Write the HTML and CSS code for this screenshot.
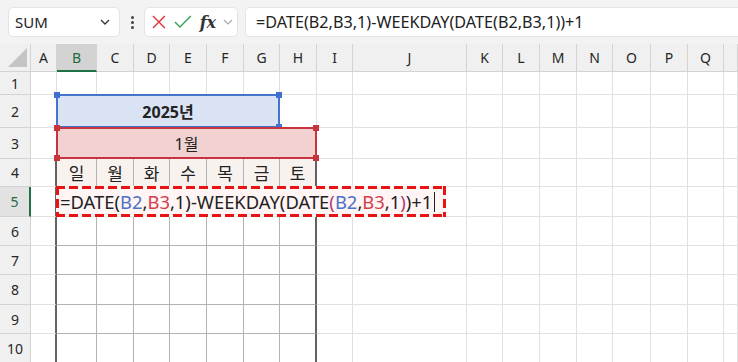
FILE: index.html
```html
<!DOCTYPE html>
<html lang="ko">
<head>
    <meta charset="UTF-8">
    <title>달력 수식</title>
    <link rel="stylesheet" href="styles.css">
</head>
<body>
    <div class="topbar">
        <div class="namebox">
            <span>SUM</span>
            <svg width="10" height="6" viewBox="0 0 10 6"><polyline points="1,1 5,5 9,1" fill="none" stroke="#333" stroke-width="1.3"/></svg>
        </div>
        <div class="kebab"><i></i><i></i><i></i></div>
        <div class="fxbox">
            <svg width="16" height="16" viewBox="0 0 16 16"><path d="M2 2 L14 14 M14 2 L2 14" stroke="#e2323c" stroke-width="1.4" fill="none"/></svg>
            <svg width="18" height="14" viewBox="0 0 18 14"><polyline points="1,7 6,12 17,1" fill="none" stroke="#3aa555" stroke-width="1.5"/></svg>
            <span class="fx">fx</span>
            <svg width="10" height="6" viewBox="0 0 10 6"><polyline points="1,1 5,5 9,1" fill="none" stroke="#aaa" stroke-width="1.2"/></svg>
        </div>
        <div class="formula">=DATE(B2,B3,1)-WEEKDAY(DATE(B2,B3,1))+1</div>
    </div>

    <div class="sheet" id="sheet">
        <div class="corner"><svg width="19" height="19" viewBox="0 0 19 19"><polygon points="19,0 19,19 0,19" fill="#c4c4c4"/></svg></div>
        <div class="box year">2025년
            <b class="h tl"></b><b class="h tr"></b><b class="h br"></b>
        </div>
        <div class="box month">1월
            <b class="h tl"></b><b class="h tr"></b><b class="h bl"></b><b class="h br"></b>
        </div>
        <div class="edit">=DATE(<span class="ref-b">B2</span>,<span class="ref-r">B3</span>,1)-WEEKDAY(DATE<span class="par">(</span><span class="ref-b">B2</span>,<span class="ref-r">B3</span>,1<span class="par">)</span>)+1<span class="caret"></span></div>
    </div>

    <script>
        const lettres = ['', 'A', 'B', 'C', 'D', 'E', 'F', 'G', 'H', 'I', 'J', 'K', 'L', 'M', 'N', 'O', 'P', 'Q', ''];
        const jours = ['일', '월', '화', '수', '목', '금', '토'];
        const sheet = document.getElementById('sheet');
        const first = sheet.firstElementChild;

        // grille de cellules, posée sous les cadres
        for (let r = 0; r <= 10; r++) {
            for (let c = 0; c < lettres.length; c++) {
                if (r === 0 && c === 0) continue;
                const d = document.createElement('div');
                d.className = 'c';
                if (r === 0) {
                    d.classList.add('ch');
                    d.textContent = lettres[c];
                    if (c === 2) d.classList.add('sel');
                } else if (c === 0) {
                    d.classList.add('rh');
                    d.textContent = r;
                    if (r === 5) d.classList.add('sel');
                } else {
                    if (r >= 4 && c >= 2 && c <= 8) d.classList.add('tbl');
                    if (r === 4 && c >= 2 && c <= 8) { d.classList.add('day'); d.textContent = jours[c - 2]; }
                    if (r >= 4 && (c === 1 || c === 8)) d.classList.add('edge');
                }
                d.style.gridArea = (r + 1) + ' / ' + (c + 1);
                sheet.insertBefore(d, first);
            }
        }
    </script>
</body>
</html>
```

FILE: styles.css
```css
* { box-sizing: border-box; }
body { margin: 0; width: 738px; height: 362px; overflow: hidden; background: #fff; font-family: "Noto Sans", "Noto Sans CJK KR", sans-serif; color: #222; }

.topbar { display: flex; align-items: center; height: 44px; padding: 7px 0 7px 8px; background: #f3f3f3; }
.namebox { width: 112px; height: 30px; display: flex; align-items: center; justify-content: space-between; padding: 0 9px 0 6px; background: #fff; border: 1px solid #e4e4e4; border-radius: 5px; font-size: 15px; }
.kebab { width: 24px; display: flex; flex-direction: column; align-items: center; gap: 2px; }
.kebab i { width: 3px; height: 3px; border-radius: 50%; background: #444; }
.fxbox { width: 94px; height: 30px; display: flex; align-items: center; gap: 7px; padding: 0 4px 0 6px; background: #fff; border: 1px solid #e4e4e4; border-radius: 5px; }
.fx { font-family: "DejaVu Serif", serif; font-style: italic; font-weight: bold; font-size: 16px; color: #333; margin-left: 1px; }
.formula { flex: 1; height: 30px; margin-left: 7px; padding-left: 10px; line-height: 28px; background: #fff; border: 1px solid #e4e4e4; border-right: 0; border-radius: 5px 0 0 5px; font-size: 16.2px; white-space: nowrap; }

.sheet { display: grid; grid-template-columns: 31px 26px 40px 37px 36px 37px 37px 36px 37px 36px 114px 36px 37px 37px 36px 38px 37px 36px 1fr; grid-template-rows: 28px 23px 33px 31px 28px 30px 29px 29px 30px 29px 29px; }
.c { display: flex; align-items: center; justify-content: center; border-right: 1px solid #e1e1e1; border-bottom: 1px solid #e1e1e1; }
.ch, .rh { background: #f0f0f0; border-color: #d3d3d3; font-size: 14px; color: #262626; }
.ch.sel { background: #d3d3d3; color: #1e6b43; border-bottom: 2px solid #1e7145; }
.rh.sel { background: #e2e2e2; color: #1e6b43; border-right: 2px solid #1e7145; }
.corner { grid-area: 1 / 1; display: flex; align-items: flex-end; justify-content: flex-end; padding: 0 3px 4px 0; background: #f0f0f0; border-right: 1px solid #d3d3d3; border-bottom: 1px solid #d3d3d3; }

.tbl { border-color: #b3b3b3; }
.day { background: #f8f2ef; font-size: 17px; }
.edge { border-right: 2px solid #626262; }

.box { position: relative; display: flex; align-items: center; justify-content: center; font-size: 16px; }
.year { grid-column: 3 / 9; grid-row: 3; margin: -1px 0 0 -1px; background: #dae3f3; border: 2px solid #4474cc; font-weight: bold; }
.month { grid-column: 3 / 10; grid-row: 4; margin: -1px 0 0 -1px; background: #f1d2d1; border: 2px solid #c73440; }
.h { position: absolute; width: 6px; height: 6px; }
.year .h { background: #3f6fcf; }
.month .h { background: #c73440; }
.tl { top: -4px; left: -4px; }
.tr { top: -4px; right: -4px; }
.bl { bottom: -4px; left: -4px; }
.br { bottom: -4px; right: -4px; }

/* cadre pointillé en dégradés : tirets de 9px, comme dans Excel */
.edit {
    grid-column: 3 / 12; grid-row: 6; justify-self: start; position: relative;
    display: flex; align-items: center; margin: -1px 0 0 -1px; padding: 3px 11px 3px 4px;
    font-size: 18.4px; white-space: nowrap;
    background:
        repeating-linear-gradient(90deg, #e81414 0 9px, transparent 9px 13px) top left / 100% 3px no-repeat,
        repeating-linear-gradient(90deg, #e81414 0 9px, transparent 9px 13px) bottom left / 100% 3px no-repeat,
        repeating-linear-gradient(180deg, #e81414 0 9px, transparent 9px 13px) top left / 3px 100% no-repeat,
        repeating-linear-gradient(180deg, #e81414 0 9px, transparent 9px 13px) top right / 3px 100% no-repeat,
        #fff5f5;
}
.ref-b { color: #4a72c6; }
.ref-r { color: #d0404c; }
.par { color: #b23c78; }
.caret { width: 1px; height: 20px; margin-left: 2px; background: #222; }
```
